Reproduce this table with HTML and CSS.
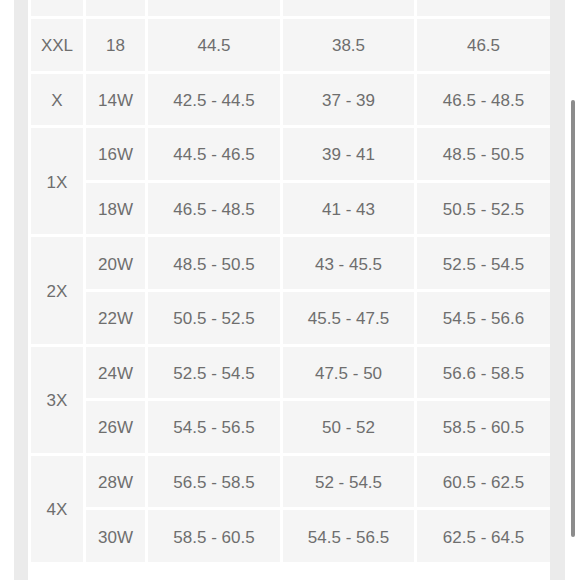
FILE: index.html
```html
<!DOCTYPE html>
<html>
<head>
<meta charset="utf-8">
<link rel="stylesheet" href="styles.css">
</head>
<body>
<div class="page">
  <div class="band band-left"></div>
  <div class="card">
    <div class="grid">
      <div class="c"></div><div class="c"></div><div class="c"></div><div class="c"></div><div class="c"></div>

      <div class="c">XXL</div><div class="c">18</div><div class="c">44.5</div><div class="c">38.5</div><div class="c">46.5</div>

      <div class="c">X</div><div class="c">14W</div><div class="c">42.5 - 44.5</div><div class="c">37 - 39</div><div class="c">46.5 - 48.5</div>

      <div class="c span2">1X</div><div class="c">16W</div><div class="c">44.5 - 46.5</div><div class="c">39 - 41</div><div class="c">48.5 - 50.5</div>
      <div class="c">18W</div><div class="c">46.5 - 48.5</div><div class="c">41 - 43</div><div class="c">50.5 - 52.5</div>

      <div class="c span2">2X</div><div class="c">20W</div><div class="c">48.5 - 50.5</div><div class="c">43 - 45.5</div><div class="c">52.5 - 54.5</div>
      <div class="c">22W</div><div class="c">50.5 - 52.5</div><div class="c">45.5 - 47.5</div><div class="c">54.5 - 56.6</div>

      <div class="c span2">3X</div><div class="c">24W</div><div class="c">52.5 - 54.5</div><div class="c">47.5 - 50</div><div class="c">56.6 - 58.5</div>
      <div class="c">26W</div><div class="c">54.5 - 56.5</div><div class="c">50 - 52</div><div class="c">58.5 - 60.5</div>

      <div class="c span2">4X</div><div class="c">28W</div><div class="c">56.5 - 58.5</div><div class="c">52 - 54.5</div><div class="c">60.5 - 62.5</div>
      <div class="c">30W</div><div class="c">58.5 - 60.5</div><div class="c">54.5 - 56.5</div><div class="c">62.5 - 64.5</div>
    </div>
  </div>
  <div class="band band-right"></div>
  <div class="gutter"></div>
  <div class="scrollbar"></div>
</div>
</body>
</html>
```

FILE: styles.css
```css
html, body {
  margin: 0;
  padding: 0;
  background: #ffffff;
}
.page {
  position: relative;
  width: 580px;
  height: 580px;
  overflow: hidden;
  display: flex;
  padding-left: 14px;
  box-sizing: border-box;
}
.band {
  background: #ebebeb;
  height: 580px;
  flex: none;
}
.band-left { width: 14px; }
.band-right { width: 15px; }
.gutter { width: 15px; flex: none; }
.card {
  background: #ffffff;
  padding-left: 3px;
  width: 519px;
  flex: none;
}
.grid {
  display: grid;
  grid-template-columns: 52px 59px 132px 131px 133px;
  grid-template-rows: 16px repeat(10, 51.6px);
  gap: 3px;
}
.c {
  background: #f5f5f5;
  display: flex;
  align-items: center;
  justify-content: center;
  padding-top: 3px;
  box-sizing: border-box;
  font-family: "Liberation Sans", Arial, sans-serif;
  font-size: 17px;
  color: #6e6e6e;
}
.span2 { grid-row: span 2; }
.scrollbar {
  position: absolute;
  left: 571px;
  top: 100px;
  width: 4px;
  height: 437px;
  border-radius: 2px;
  background: #8c8c8c;
}
```
